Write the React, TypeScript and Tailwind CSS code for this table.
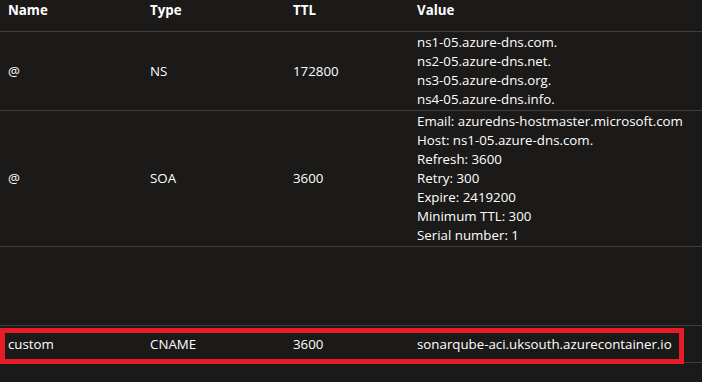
import React from "react";

type DnsRecord = {
    name: string;
    type: string;
    ttl: string;
    value: string[];
    height: string;
};

const records: DnsRecord[] = [
    {
        name: "@",
        type: "NS",
        ttl: "172800",
        value: [
            "ns1-05.azure-dns.com.",
            "ns2-05.azure-dns.net.",
            "ns3-05.azure-dns.org.",
            "ns4-05.azure-dns.info.",
        ],
        height: "h-[79px]",
    },
    {
        name: "@",
        type: "SOA",
        ttl: "3600",
        value: [
            "Email: azuredns-hostmaster.microsoft.com",
            "Host: ns1-05.azure-dns.com.",
            "Refresh: 3600",
            "Retry: 300",
            "Expire: 2419200",
            "Minimum TTL: 300",
            "Serial number: 1",
        ],
        height: "h-[136px]",
    },
    {
        name: "",
        type: "",
        ttl: "",
        value: [],
        height: "h-[79px]",
    },
];

const cols = "grid grid-cols-[142px_143px_124px_1fr] items-center";

const App = () => {
    return (
        <div
            className="relative w-[702px] h-[382px] overflow-hidden bg-[#1b1a19] text-white text-[13.3px] leading-[19px]"
            style={{ fontFamily: '"Open Sans", "Noto Sans", sans-serif' }}
        >
            <div className={`${cols} h-[32px] pb-[11px] border-b border-[#3f3e3d] font-bold`}>
                <div className="pl-2">Name</div>
                <div className="pl-2">Type</div>
                <div className="pl-2">TTL</div>
                <div className="pl-2">Value</div>
            </div>
            {records.map((rec, i) => (
                <div
                    key={i}
                    className={`${cols} ${rec.height} border-b border-[#3f3e3d]`}
                >
                    <div className="pl-2">{rec.name}</div>
                    <div className="pl-2">{rec.type}</div>
                    <div className="pl-2">{rec.ttl}</div>
                    <div className="pl-2">
                        {rec.value.map((line) => (
                            <div key={line}>{line}</div>
                        ))}
                    </div>
                </div>
            ))}
            <div className={`${cols} h-[37px] border-b border-[#3f3e3d]`}>
                <div className="pl-2">custom</div>
                <div className="pl-2">CNAME</div>
                <div className="pl-2">3600</div>
                <div className="pl-2">sonarqube-aci.uksouth.azurecontainer.io</div>
            </div>
            {/* highlight box drawn over the CNAME row */}
            <div className="absolute left-0 top-[328px] w-[684px] h-[36px] border-[5px] border-[#e81c24]" />
        </div>
    );
};

export default App;
